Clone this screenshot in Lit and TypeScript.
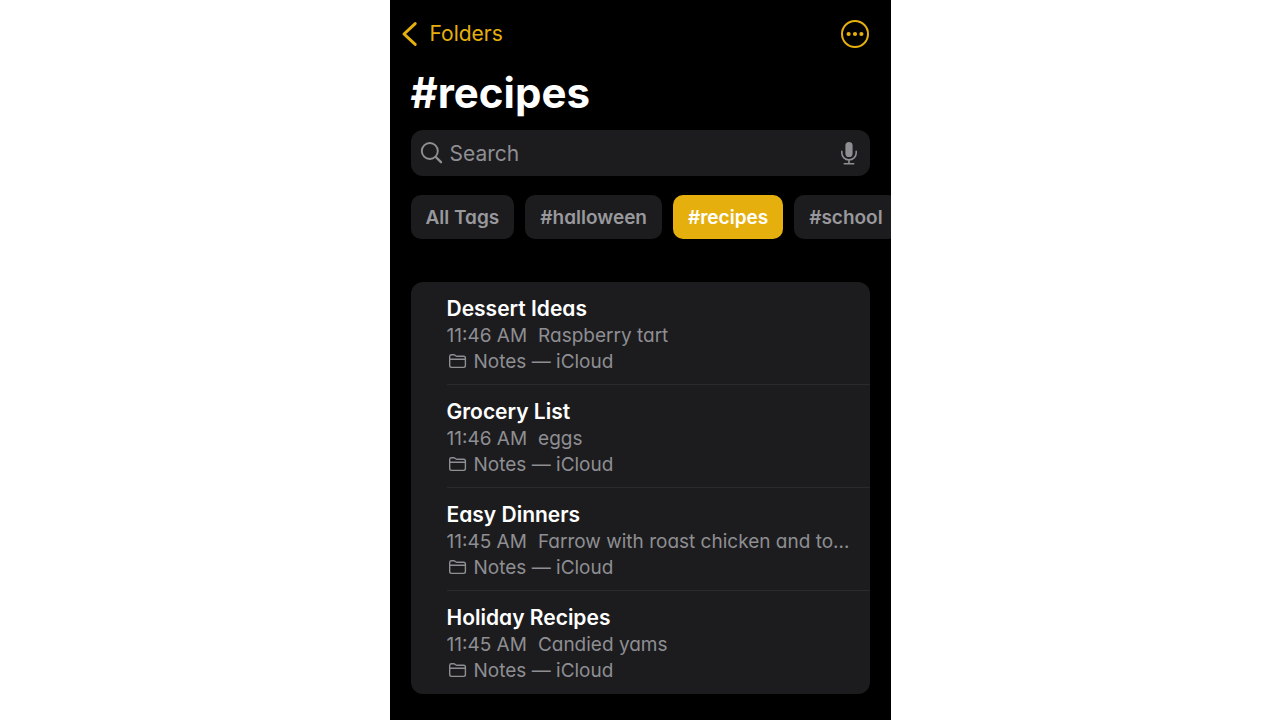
import { LitElement, html, css, svg } from "lit";
import { customElement, property, state } from "lit/decorators.js";
import { classMap } from "lit/directives/class-map.js";

interface Note {
  title: string;
  time: string;
  preview: string;
  folder: string;
}

const TAGS = ["All Tags", "#halloween", "#recipes", "#school"];

const NOTES: Note[] = [
  { title: "Dessert Ideas", time: "11:46 AM", preview: "Raspberry tart", folder: "Notes — iCloud" },
  { title: "Grocery List", time: "11:46 AM", preview: "eggs", folder: "Notes — iCloud" },
  { title: "Easy Dinners", time: "11:45 AM", preview: "Farrow with roast chicken and to…", folder: "Notes — iCloud" },
  { title: "Holiday Recipes", time: "11:45 AM", preview: "Candied yams", folder: "Notes — iCloud" },
];

@customElement("note-row")
export class NoteRow extends LitElement {
  @property({ attribute: false }) note!: Note;

  static styles = css`
    :host {
      display: block;
    }
    .link {
      display: block;
      padding: 12px 16px 9px 0;
      color: #8e8e93;
      text-decoration: none;
      font-size: 19px;
      line-height: 26px;
    }
    .title {
      margin: 0;
      color: #fff;
      font-size: 21px;
      font-weight: 600;
      line-height: 29px;
    }
    .meta,
    .folder {
      display: flex;
      align-items: center;
      white-space: nowrap;
    }
    .meta {
      gap: 11px;
    }
    .folder {
      gap: 7px;
      padding-left: 1px;
    }
    .preview {
      overflow: hidden;
    }
    .icon {
      width: 19px;
      height: 16px;
      flex: none;
    }
  `;

  render() {
    const n = this.note;
    return html`<a class="link" href="#">
      <h2 class="title">${n.title}</h2>
      <div class="meta"><span>${n.time}</span><span class="preview">${n.preview}</span></div>
      <div class="folder">
        <svg class="icon" viewBox="0 1 19 16" fill="none" stroke="currentColor" stroke-width="1.4" aria-hidden="true">
          <path d="M1.7 12.6V3.4Q1.7 1.7 3.5 1.7H5.7Q6.4 1.7 7 2.2L7.7 2.8Q8.2 3.2 8.9 3.2H15.6Q17.4 3.2 17.4 5V12.6Q17.4 14.4 15.6 14.4H3.5Q1.7 14.4 1.7 12.6ZM1.7 6.3H17.4" />
        </svg>
        <span>${n.folder}</span>
      </div>
    </a>`;
  }
}

@customElement("app-root")
export class AppRoot extends LitElement {
  @state() private selected = "#recipes";

  static styles = css`
    :host {
      display: flex;
      justify-content: center;
      min-height: 100vh;
      background: #fff;
      font-family: Inter, "Liberation Sans", sans-serif;
    }
    .screen {
      box-sizing: border-box;
      width: 100%;
      max-width: 501px;
      padding: 12px 0 26px;
      overflow: hidden;
      background: #000;
    }
    .bar {
      display: flex;
      align-items: center;
      justify-content: space-between;
      height: 44px;
      padding: 0 21px 0 11px;
    }
    .back {
      display: flex;
      align-items: center;
      gap: 12px;
      color: #e5b00d;
      font-size: 21px;
      line-height: 28px;
      text-decoration: none;
    }
    .chevron {
      width: 17px;
      height: 26px;
    }
    .more {
      display: flex;
      padding: 0;
      border: 0;
      background: none;
      color: #e5b00d;
    }
    .more svg {
      width: 30px;
      height: 30px;
    }
    .heading {
      margin: 10px 21px;
      color: #fff;
      font-size: 42px;
      font-weight: 700;
      line-height: 54px;
    }
    .search {
      display: flex;
      align-items: center;
      gap: 6px;
      height: 46px;
      margin: 0 21px;
      padding: 0 9px;
      border-radius: 12px;
      background: #1c1c1e;
      color: #8e8e93;
    }
    .glass {
      width: 24px;
      height: 24px;
      flex: none;
    }
    .field {
      flex: 1;
      min-width: 0;
      padding: 2px 0 0;
      border: 0;
      outline: 0;
      background: none;
      color: #fff;
      font: inherit;
      font-size: 21px;
      line-height: 28px;
      appearance: none;
    }
    .field::placeholder {
      color: #8e8e93;
      opacity: 1;
    }
    .mic {
      display: flex;
      padding: 0;
      border: 0;
      background: none;
      color: inherit;
    }
    .mic svg {
      width: 24px;
      height: 26px;
    }
    .tags {
      display: flex;
      gap: 11px;
      margin-top: 19px;
      padding-left: 21px;
      overflow: hidden;
    }
    .tag {
      flex: none;
      height: 44px;
      padding: 0 15px;
      border: 0;
      border-radius: 10px;
      background: #1c1c1e;
      color: #98989d;
      font: inherit;
      font-size: 19px;
      font-weight: 600;
      font-feature-settings: "cv11";
    }
    .tag.on {
      background: #e5b00d;
      color: #fff;
    }
    .notes {
      margin: 43px 21px 0;
      padding: 0 0 0 36px;
      border-radius: 12px;
      background: #1c1c1e;
      list-style: none;
      font-feature-settings: "cv11";
    }
    .item {
      border-bottom: 1px solid #2b2b2d;
    }
    .item:last-child {
      border-bottom-color: transparent;
    }
  `;

  render() {
    return html`<main class="screen">
      <nav class="bar">
        <a class="back" href="#">
          <svg class="chevron" viewBox="0 0 17 26" fill="none" stroke="currentColor" stroke-width="3" stroke-linecap="round" stroke-linejoin="round" aria-hidden="true">
            <path d="M14.2 2.6 3 13 14.2 23.4" />
          </svg>
          <span>Folders</span>
        </a>
        <button class="more" aria-label="More">
          <svg viewBox="0 0 30 30" aria-hidden="true">
            <circle cx="15" cy="15" r="13" fill="none" stroke="currentColor" stroke-width="2" />
            ${[8.6, 15, 21.4].map((x) => svg`<circle cx=${x} cy="15" r="2.1" fill="currentColor" />`)}
          </svg>
        </button>
      </nav>
      <h1 class="heading">#recipes</h1>
      <div class="search">
        <svg class="glass" viewBox="0 0 24 24" fill="none" stroke="currentColor" stroke-width="1.9" stroke-linecap="round" aria-hidden="true">
          <circle cx="9.8" cy="10" r="8" />
          <path d="M15.8 16 21 21.2" stroke-width="2.4" />
        </svg>
        <input class="field" type="search" placeholder="Search" aria-label="Search" />
        <button class="mic" aria-label="Dictate">
          <svg viewBox="0 0 24 26" fill="none" stroke="currentColor" stroke-width="1.6" stroke-linecap="round" aria-hidden="true">
            <rect x="8.4" y="2" width="7.2" height="15" rx="3.6" fill="currentColor" stroke="none" />
            <path d="M4.8 11.4V13A7.2 6.9 0 0 0 19.2 13V11.4M12 20V23.8M7.3 23.8H16.7" />
          </svg>
        </button>
      </div>
      <div class="tags">
        ${TAGS.map(
          (t) => html`<button
            class=${classMap({ tag: true, on: t === this.selected })}
            aria-pressed=${t === this.selected}
            @click=${() => (this.selected = t)}
          >${t}</button>`
        )}
      </div>
      <ul class="notes">
        ${NOTES.map((n) => html`<li class="item"><note-row .note=${n}></note-row></li>`)}
      </ul>
    </main>`;
  }
}
